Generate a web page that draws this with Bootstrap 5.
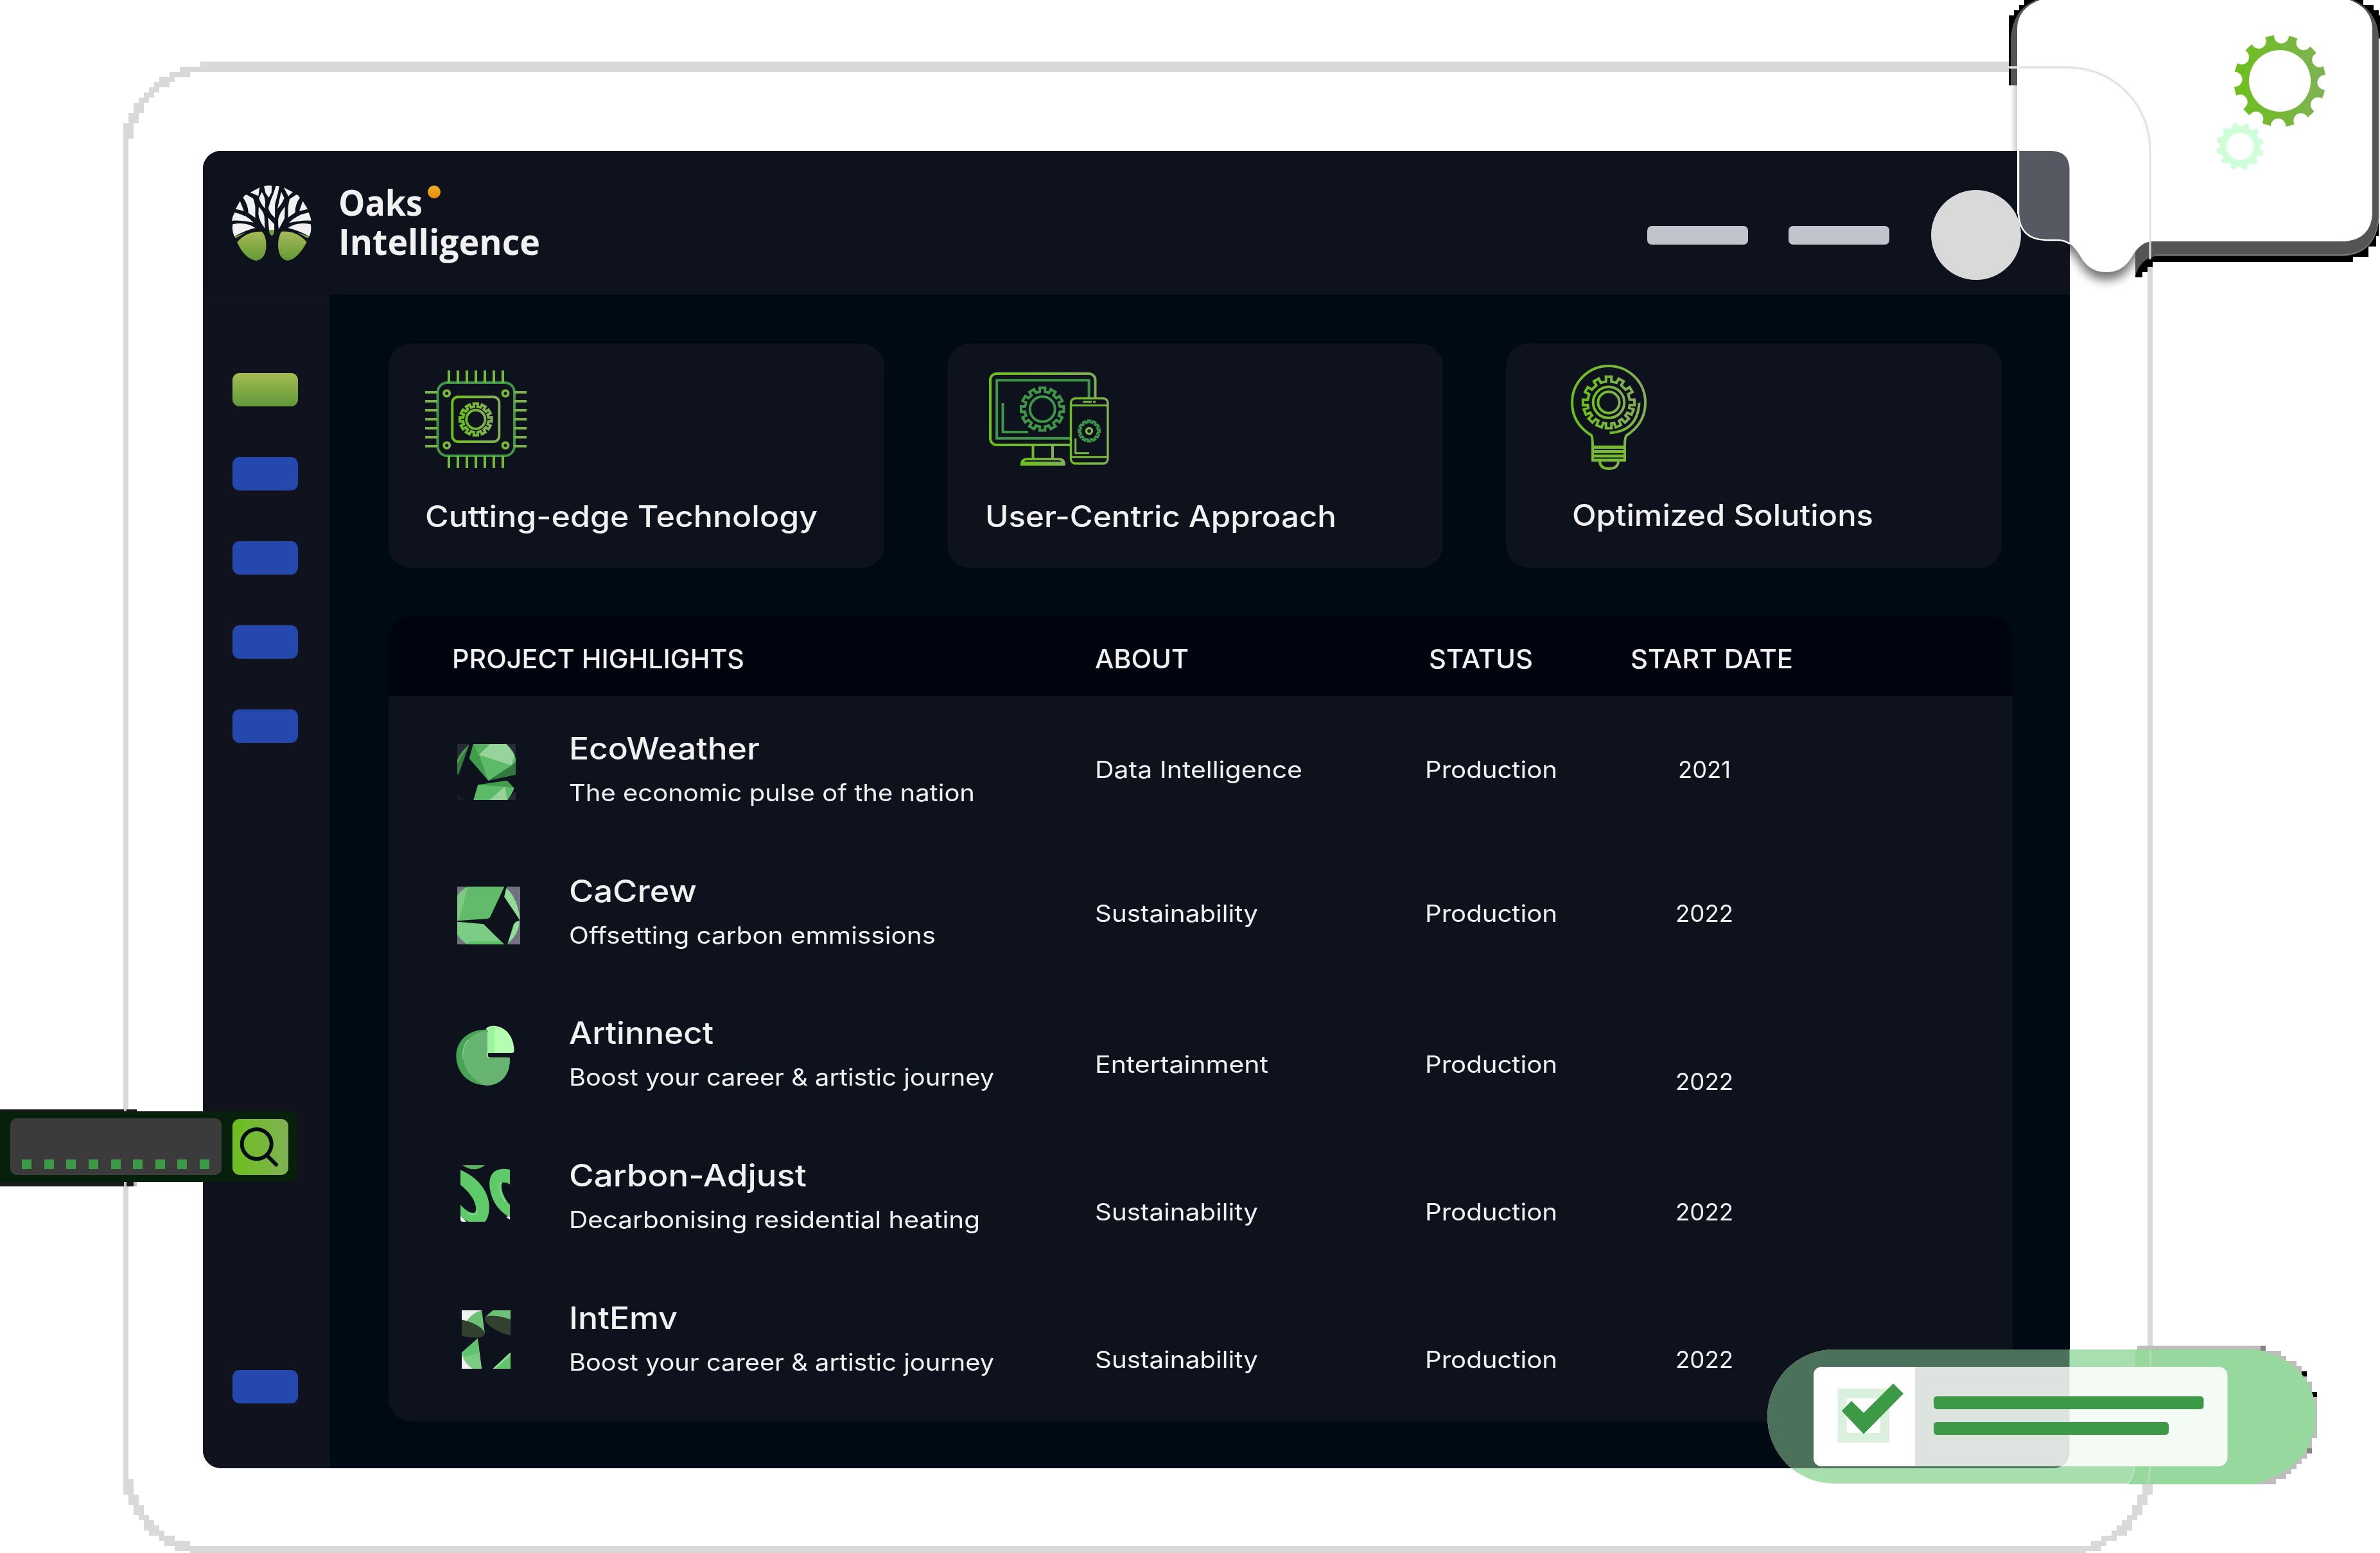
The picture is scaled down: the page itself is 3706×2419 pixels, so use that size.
<!DOCTYPE html>
<html lang="en">
<head>
<meta charset="utf-8">
<title>Oaks Intelligence</title>
<link href="https://cdn.jsdelivr.net/npm/bootstrap@5.3.0/dist/css/bootstrap.min.css" rel="stylesheet">
<style>
body{margin:0;background:#fff;font-family:Inter,"Noto Sans",sans-serif;color:#f1f1f2}
svg{display:block}
.stage{width:3706px;height:2419px;padding:235px 0 0 316px}
.overlay{position:absolute;left:0;top:0}
.panel{width:2907px;height:2052px;border-radius:28px;background:#000a15}
.topbar{height:224px;background:#0d121d;padding:54px 78px 0 45px}
.brand{font:700 55px/61px "Open Sans","Noto Sans",sans-serif;margin-left:42px;margin-top:-5px}
.brand .fit{height:61px}
.orange-dot{left:139px;top:5px;width:20px;height:20px;background:linear-gradient(#ecae2b,#ea8d03)}
.nav-pill{width:157px;height:29px;border-radius:7px;background:#c1c4cb}
.avatar{width:140px;height:140px;background:#d9d9d9;z-index:3}
.avatar-float{left:3007px;top:296px}
.rail{width:198px;background:#10131e;padding:122px 0 101px 46px}
.tile{width:102px;height:52px;border-radius:11px;background:#2548ae}
.tile-on{background:linear-gradient(#a5bb51,#60993a)}
.main-area{padding:76px 0 0 91px}
.feature{width:772px;height:350px;border-radius:36px;background:#0d121d}
.feature .fit{font-size:46px;line-height:60px;font-weight:500}
.board{width:2529px;height:1255px;border-radius:36px;background:#0d121d;margin-top:74px}
.board-head{height:125px;background:#00040f;font-size:41px;font-weight:500;line-height:50px;padding-top:42px}
.c-name{width:1100px}.c-about{width:514px}.c-status{width:392px}.c-date{width:300px}
.item{height:221.7px}
.pic{width:281px;padding-left:107px}
.label{width:819px}
.item h2{font-size:47.5px;line-height:60px;font-weight:500;margin:0;padding-top:52px;height:126px}
.item .sub,.item .cell{font-size:37px;line-height:50px;font-weight:400}
.item .cell{padding-top:90px}
.r2 .cell{padding-top:92px}.r3 .cell{padding-top:106px}.r3 .c-date{padding-top:133px}.r4 .cell{padding-top:114px}.r5 .cell{padding-top:122px}
.fit{display:inline-block;white-space:nowrap;transform-origin:0 50%}
.search{left:0;top:1731px;width:463px;height:110px;background:#06200b;border-radius:0 12px 12px 0;padding:11px 14px 11px 16px;z-index:4}
.field{width:329px;height:88px;border-radius:10px;background:#3c3b3b;padding:0 19px 9px 18px}
.dash{width:15px;height:15px;background:#3c9a47}
.search-btn{width:87px;height:87px;border-radius:11px;background:linear-gradient(90deg,#6dbe1e,#80b254)}
</style>
<script src="https://cdn.jsdelivr.net/npm/bootstrap@5.3.0/dist/js/bootstrap.bundle.min.js"></script>
</head>
<body>
<div class="stage position-relative overflow-hidden">

<!-- tablet outline -->
<svg class="overlay" width="3706" height="2419" viewBox="0 0 3706 2419" fill="#d9d9d9" shape-rendering="crispEdges">
<path d="M312 96H3128V112H312zM280 104h32v8h-32zM264 112h32v8h-32zM248 120h24v8h-24zM240 128h24v8h-24zM232 136h16v8h-16zM224 144h16v8h-16zM216 152h16v8h-16zM208 160h16v16h-16zM200 176h16v16h-16zM192 192h16v24h-16zM192 216h8V2304h-8z"/>
<path d="M192 2304h16v24h-16zM200 2328h16v16h-16zM208 2344h16v16h-16zM216 2360h16v8h-16zM224 2368h16v16h-16zM232 2376h16v16h-16zM248 2384h8v16h-8zM256 2392h16v16h-16zM272 2400h16v16h-16zM288 2400h8v16h-8zM296 2408H3248V2419H296z"/>
<path d="M3344 400h8V2312h-8zM3336 2312h16v16h-16zM3328 2328h16v16h-16zM3320 2344h16v16h-16zM3312 2360h16v8h-16zM3304 2368h16v16h-16zM3296 2376h16v16h-16zM3288 2384h16v8h-16zM3272 2392h24v8h-24zM3256 2400h24v8h-24zM3240 2408h32v8h-32z"/>
</svg>

<div class="panel position-relative overflow-hidden">
  <header class="topbar d-flex align-items-start">
    <svg width="124" height="117" viewBox="395 657 255 351" preserveAspectRatio="none" fill="#f1f1f2">
      <defs><linearGradient id="leaf" x1="0" y1="0" x2="0" y2="1"><stop stop-color="#a8b957"/><stop offset="1" stop-color="#5f9a35"/></linearGradient></defs>
      <path d="M454 689L484 666 480 706zM498 661Q510 655 523 658L522 690 513 713 503 692zM536 659L547 661 543 690 533 745 533 808Q515 785 512 762 520 720 527 700zM561 666L590 688 576 707zM431 714Q435 702 441 699L463 717Q468 735 470 755V808L448 785Q447 745 431 714zM421 730L434 776 407 767zM613 714Q609 702 602 699L580 720Q576 745 575 765V806L598 783Q597 745 613 714zM622 730L638 767 611 776zM404 783Q445 795 464 830 430 818 395 821 397 800 404 783zM641 783Q600 795 578 832 615 818 649 821 647 800 641 783zM398 838Q440 825 470 855 440 865 403 895 394 865 398 838zM647 838Q605 825 575 855 610 867 643 895 652 865 647 838zM491 688Q502 715 502 735L501 765Q484 735 482 715zM553 686L563 715Q555 745 541 765zM481 756Q495 775 499 800L501 858Q483 825 480 790zM565 756L564 810 545 862Q542 830 544 810 550 780 565 756zM511 806L531 838V864H514z"/>
      <path fill="url(#leaf)" d="M412 922Q440 870 491 872 505 890 505 935 505 1000 473 1008 435 1000 412 922zM635 922Q605 868 554 872 544 890 543 935 544 1000 573 1008 605 1003 635 922z"/>
      <path fill="#70a541" d="M514 864H531Q530 890 523 891 516 890 514 864zM403 895L440 876 407 904zM643 895L605 876 638 904z"/>
    </svg>
    <div class="brand position-relative d-flex flex-column">
      <span><span class="fit" data-w="131">Oaks</span></span>
      <span><span class="fit" data-w="314">Intelligence</span></span>
      <i class="orange-dot position-absolute rounded-circle"></i>
    </div>
    <div class="ms-auto d-flex align-items-center" style="height:154px;gap:63px">
      <span class="nav-pill"></span><span class="nav-pill"></span><span class="avatar rounded-circle invisible"></span>
    </div>
  </header>

  <div class="d-flex" style="height:1828px">
    <nav class="rail d-flex flex-column flex-shrink-0">
      <div class="d-flex flex-column" style="gap:79px"><span class="tile tile-on"></span><span class="tile"></span><span class="tile"></span><span class="tile"></span><span class="tile"></span></div>
      <span class="tile mt-auto"></span>
    </nav>
    <main class="main-area">
      <div class="d-flex" style="gap:98px">
        <section class="feature" style="padding:42px 0 0 57px">
          <svg width="158" height="153" viewBox="0 0 158 153" fill="none" stroke-width="4">
            <defs><linearGradient id="limeB"><stop stop-color="#6dbf1c"/><stop offset="1" stop-color="#83ae58"/></linearGradient></defs>
            <rect x="19.5" y="19" width="119.500" height="114" rx="15" stroke="#3f9648"/>
            <path stroke="#74bd2b" d="M37 0V19M51 0V19M65 0V19M79 0V19M93 0V19M107 0V19M121 0V19M37 133V152M51 133V152M65 133V152M79 133V152M93 133V152M107 133V152M121 133V152"/>
            <path stroke="#7bb445" d="M0 34H19M0 48H19M0 62H19M0 76H19M0 90H19M0 104H19M0 118H19M139 34H158M139 48H158M139 62H158M139 76H158M139 90H158M139 104H158M139 118H158"/>
            <g stroke="url(#limeB)"><rect x="42.300" y="41.300" width="73" height="69.700" rx="9"/><circle cx="33.700" cy="35.700" r="4.500"/><circle cx="125" cy="35.700" r="4.500"/><circle cx="33.700" cy="116.700" r="4.500"/><circle cx="125" cy="116.700" r="4.500"/><circle cx="78.800" cy="76.300" r="14.600"/><path data-gear="78.8,76.3,25,20,12"/></g>
          </svg>
          <div style="margin-top:44px"><span class="fit" data-w="611">Cutting-edge Technology</span></div>
        </section>
        <section class="feature" style="padding:45px 0 0 59px">
          <svg style="margin-left:6px" width="188" height="146" viewBox="0 0 188 146" fill="none" stroke-width="4">
            <g stroke="url(#limeB)"><rect x="2" y="2" width="163.500" height="111" rx="10"/><path d="M68.500 112V134M99 112V134"/><path d="M51 143.500V142Q52 135 60 135H108Q117 135 117 143.500zM52 141H116"/></g>
            <g stroke="#3f9648"><rect x="12.200" y="12.300" width="143.500" height="90.500"/><path d="M21.500 48V93H61"/><circle cx="83.200" cy="57.300" r="19.500"/><path data-gear="83.2,57.3,33.5,27.5,12"/></g>
            <rect x="127.500" y="40.500" width="57.500" height="101.500" rx="7" fill="#0d121d" stroke="url(#limeB)" stroke-width="3.400"/>
            <path stroke="#79b83a" stroke-width="3" d="M128 51.500H185M128 131.700H185M146 46H160M162 46H166M134.700 103V125.700H156"/>
            <path stroke="#3f9648" stroke-width="3" data-gear="156,91.3,16.5,13.5,12"/><circle cx="156" cy="91.300" r="4.500" stroke="#80b650" stroke-width="3.500"/>
          </svg>
          <div style="margin-top:48px"><span class="fit" data-w="547">User-Centric Approach</span></div>
        </section>
        <section class="feature" style="padding:33px 0 0 101px">
          <svg width="118" height="164" viewBox="0 0 118 164" fill="none" stroke-width="4">
            <g stroke="url(#limeB)">
            <path d="M34 127Q34 113 32 110C14 99 2 82 2 59A57 57 0 0 1 116 59C116 82 104 99 87 110Q84 112 84 127"/>
            <path d="M45 151Q46 162 59 162 73 162 74 151"/><circle cx="59" cy="58.800" r="24.300"/><circle cx="59" cy="58.800" r="16.600"/>
            <path d="M106.500 59.500Q104 104 60.500 106.300"/>
            <path data-gear="59,58.8,40.3,33,14" data-angles="0,29,60,90,112,135,158,180,202,225,248,270,300,331"/></g>
            <rect x="32" y="126" width="54" height="25" fill="#78ba35"/>
            <path d="M36 132H82M36 139H82M36 145.500H82" stroke="#0a1a10" stroke-width="2.200"/>
          </svg>
          <div style="margin-top:40px;padding-left:2px"><span class="fit" data-w="469">Optimized Solutions</span></div>
        </section>
      </div>

      <section class="board overflow-hidden">
        <div class="board-head d-flex">
          <div class="c-name" style="padding-left:99px"><span class="fit" data-w="455">PROJECT HIGHLIGHTS</span></div>
          <div class="c-about"><span class="fit" data-w="146">ABOUT</span></div>
          <div class="c-status" style="padding-left:6px"><span class="fit" data-w="162">STATUS</span></div>
          <div class="c-date" style="margin-left:-72px"><span class="fit" data-w="253">START DATE</span></div>
        </div>

        <div class="item r1 d-flex">
          <div class="pic" style="padding-top:75px"><svg width="91" height="87" viewBox="95 82 274 244" preserveAspectRatio="none">
            <path fill="#262b36" d="M95 82H150V90L95 150zM320 82H369V155zM369 290V326H325z"/><path fill="#171c27" d="M95 300L142 326H95z"/>
            <path fill="#33783e" d="M95 150Q115 110 151 86L101 215H95z"/><path fill="#499c52" d="M95 150Q115 110 151 86L95 170z"/>
            <path fill="#5cbb68" d="M170 82H325Q360 110 369 145V215L241 241 152 145z"/><path fill="#3f9d4b" d="M170 82L152 145 241 241 197 129z"/><path fill="#55b060" d="M170 82H248L197 129z"/>
            <path fill="#96d49c" d="M248 82H325Q345 100 362 130L350 175 197 129z"/><path fill="#33793f" d="M369 160V215L241 241 350 175z"/>
            <path fill="#5cbb68" d="M192 260L328 242 362 275Q350 305 330 326H171z"/><path fill="#3f9d4b" d="M192 260L328 242 362 275 318 268z"/><path fill="#96d49c" d="M318 268L330 326H247z"/>
          </svg></div>
          <div class="label"><h2><span class="fit" data-w="297">EcoWeather</span></h2><div class="sub"><span class="fit" data-w="632">The economic pulse of the nation</span></div></div>
          <div class="cell c-about"><span class="fit" data-w="323">Data Intelligence</span></div><div class="cell c-status"><span class="fit" data-w="206">Production</span></div><div class="cell c-date"><span class="fit" data-w="82" style="margin-left:2px">2021</span></div>
        </div>
        <div class="item r2 d-flex">
          <div class="pic" style="padding-top:75px"><svg width="98" height="90" viewBox="95 703 295 252" preserveAspectRatio="none">
            <path fill="#70737d" d="M95 703H145L95 745zM325 703H390V955H330L386 850zM95 905L145 955H95z"/>
            <path fill="#0d121d" d="M315 745L388 850 362 862 330 952H313L218 866 245 842z"/>
            <path fill="#62bb6a" d="M95 743Q115 715 145 703H316L248 838 238 843 95 852z"/><path fill="#7fc986" d="M95 743Q115 715 145 703L102 852H95z"/>
            <path fill="#7bcd83" d="M95 856L218 866 315 955H142Q110 935 95 910z"/><path fill="#5dc269" d="M142 955L150 942H300L315 955z"/>
            <path fill="#90dd97" d="M325 709Q380 755 389 850L315 747zM386 853Q385 910 331 952L360 867Q370 853 386 853z"/>
          </svg></div>
          <div class="label"><h2><span class="fit" data-w="199">CaCrew</span></h2><div class="sub"><span class="fit" data-w="571">Offsetting carbon emmissions</span></div></div>
          <div class="cell c-about"><span class="fit" data-w="254">Sustainability</span></div><div class="cell c-status"><span class="fit" data-w="206">Production</span></div><div class="cell c-date"><span class="fit" data-w="90" style="margin-left:-2px">2022</span></div>
        </div>
        <div class="item r3 d-flex">
          <div class="pic" style="padding-top:70px;padding-left:105px"><svg width="91" height="94" viewBox="90 1308 272 262" preserveAspectRatio="none">
            <path fill="#48a455" d="M237 1327V1448H338Q343 1450 341 1460C338 1535 290 1569 232 1569 145 1568 91 1510 91 1440 92 1375 150 1327 225 1327z"/>
            <path fill="#66b470" d="M237 1330V1448H338Q343 1450 341 1460C338 1535 290 1569 232 1569 165 1550 125 1500 125 1440 125 1380 160 1340 237 1330z"/>
            <path fill="none" stroke="#8fd198" stroke-width="4" d="M148 1370Q118 1400 123 1455"/><path stroke="#b8e8bc" stroke-width="4" fill="none" d="M237 1335V1440Q237 1449 245 1449"/>
            <path fill="#b5fdb1" d="M229 1322Q245 1310 267 1310C330 1315 360 1365 361 1418Q361 1428 350 1428H240V1335z"/><path fill="#9bf59a" d="M240 1335L245 1313 270 1310V1428H240z"/>
          </svg></div>
          <div class="label"><h2><span class="fit" data-w="225">Artinnect</span></h2><div class="sub"><span class="fit" data-w="662">Boost your career &amp; artistic journey</span></div></div>
          <div class="cell c-about"><span class="fit" data-w="270">Entertainment</span></div><div class="cell c-status"><span class="fit" data-w="206">Production</span></div><div class="cell c-date"><span class="fit" data-w="90" style="margin-left:-2px">2022</span></div>
        </div>
        <div class="item r4 d-flex">
          <div class="pic" style="padding-top:66px;padding-left:112px"><svg width="77" height="88" viewBox="112 105 230 264" preserveAspectRatio="none">
            <path fill="#57b561" d="M122 105H226Q175 143 122 105z"/><path fill="#f0f0f0" d="M112 340L140 369H122Q112 369 112 358zM342 338V359L325 348z"/>
            <path fill="#5fca6a" d="M112 127C200 165 246 235 246 300Q245 350 226 369H148Q128 360 112 343V290C145 325 165 330 180 326 192 305 180 250 112 197zM342 126C280 112 246 140 247 195 250 265 290 322 342 348V290C310 255 295 205 307 186Q325 182 342 195z"/>
            <path fill="none" stroke="#8adb91" stroke-width="5" d="M148 330Q180 345 190 320M300 185Q285 220 320 275"/>
          </svg></div>
          <div class="label"><h2><span class="fit" data-w="370">Carbon-Adjust</span></h2><div class="sub"><span class="fit" data-w="640">Decarbonising residential heating</span></div></div>
          <div class="cell c-about"><span class="fit" data-w="254">Sustainability</span></div><div class="cell c-status"><span class="fit" data-w="206">Production</span></div><div class="cell c-date"><span class="fit" data-w="90" style="margin-left:-2px">2022</span></div>
        </div>
        <div class="item r5 d-flex">
          <div class="pic" style="padding-top:70px;padding-left:114px"><svg width="76" height="91" viewBox="118 782 229 274" preserveAspectRatio="none">
            <path fill="#f1f1f2" d="M118 782H212L142 835 118 826z"/><path fill="#6cc175" d="M212 782L226 890Q190 850 142 832 165 795 212 782zM265 782H347V826L229 812z"/>
            <path fill="#32412f" d="M118 826C180 840 226 870 226 893 222 912 185 916 118 902zM229 811Q285 800 347 826V900C285 885 228 850 227 823z"/>
            <path fill="#7ccb83" d="M193 914L212 1056H118V980z"/><path fill="#60c46c" d="M193 914V985L130 1000 118 980zM347 980V1056H264z"/><path fill="#8eda96" d="M345 980L264 1056H276L347 992z"/><path fill="#f1f1f2" d="M118 988Q130 1030 168 1056H118z"/>
          </svg></div>
          <div class="label"><h2><span class="fit" data-w="169">IntEmv</span></h2><div class="sub"><span class="fit" data-w="662">Boost your career &amp; artistic journey</span></div></div>
          <div class="cell c-about"><span class="fit" data-w="254">Sustainability</span></div><div class="cell c-status"><span class="fit" data-w="206">Production</span></div><div class="cell c-date"><span class="fit" data-w="90" style="margin-left:-2px">2022</span></div>
        </div>
      </section>
    </main>
  </div>
</div>

<!-- speech bubble with gears -->
<svg class="overlay" width="3706" height="470" viewBox="0 0 3706 470">
  <defs>
    <path id="bub" d="M3141 43Q3143 10 3182 -2H3653Q3692 10 3694 43V333Q3692 372 3652 376H3351C3338 377 3330 384 3322 396 3312 414 3300 424 3280 424 3258 424 3247 412 3240 400 3230 384 3222 374 3204 374H3186Q3145 372 3143 333L3141 333z"/>
    <clipPath id="tailclip"><path d="M3223 374H3325V462H3223z"/></clipPath>
    <filter id="soft" x="-20%" y="-20%" width="140%" height="150%"><feGaussianBlur stdDeviation="8"/></filter>
    <linearGradient id="side"><stop stop-color="#fff"/><stop offset="1" stop-color="#c9c9c9"/></linearGradient>
    <mask id="m1"><circle cx="3550" cy="126" r="71.500" fill="#fff"/><circle cx="3550" cy="126" r="48"/><g id="n1"></g></mask>
    <mask id="m2"><circle cx="3488" cy="228" r="37" fill="#fff"/><circle cx="3488" cy="228" r="21"/><g id="n2"></g></mask>
  </defs>
  <rect x="3130" y="133" width="12" height="102" fill="url(#side)"/>
  <g clip-path="url(#tailclip)"><use href="#bub" y="12" fill="#000" opacity=".55" filter="url(#soft)"/></g>
  <path fill="#000" shape-rendering="crispEdges" d="M3152 0H3200V133H3128V24H3136V16H3144V8H3152zM3640 0H3680V8H3696V16H3704V24H3706V60H3660zM3660 330H3704V368H3700V384H3688V400H3664V408H3352V416H3344V424H3336V432H3325V385H3400z"/>
  <path fill="#555" d="M3131 133V60Q3134 8 3182 -4H3653Q3702 10 3704.500 60V340Q3700 395 3650 399H3356Q3332 404 3325 430V376H3400L3240 133z"/>
  <path fill="none" stroke="#8d8d8d" stroke-width="1" d="M3704 60V340Q3699 394 3650 397H3356"/>
  <use href="#bub" fill="#fff"/>
  <path fill="#565962" d="M3144 235H3194Q3222.500 236 3222.500 264V380Q3216 375 3204 374H3186Q3144 372 3144 333z"/>
  <path fill="none" stroke="#fff" stroke-width="2.500" d="M3143 235V333Q3145 373 3186 374H3204Q3215 374 3223 380"/>
  <path fill="none" stroke="#e4e4e4" stroke-width="3.500" d="M3128 105H3142M3144 105H3220A128 128 0 0 1 3348 233V376"/><path d="M3348 376V404" stroke="#d5d5d5" stroke-width="3.500"/>
  <linearGradient id="gg" gradientUnits="userSpaceOnUse" x1="3479" y1="0" x2="3621" y2="0"><stop stop-color="#6dbf1c"/><stop offset="1" stop-color="#80b254"/></linearGradient>
  <rect x="3470" y="50" width="160" height="155" fill="url(#gg)" mask="url(#m1)"/>
  <rect x="3440" y="185" width="100" height="90" fill="#cfffd8" mask="url(#m2)"/>
</svg>
<span class="avatar avatar-float rounded-circle position-absolute"></span>

<!-- search box -->
<svg class="overlay" width="700" height="1860" viewBox="0 0 700 1860"><path fill="#1a1a1a" d="M0 1728H213V1732H0zM0 1840H208V1848H0z"/><path fill="#bdbdbd" d="M193 1728h4v4h-4zM193 1840h4v8h-4zM208 1840h5v8h-5z"/></svg>
<div class="search position-absolute d-flex align-items-center justify-content-between">
  <div class="field d-flex align-items-end justify-content-between"><i class="dash"></i><i class="dash"></i><i class="dash"></i><i class="dash"></i><i class="dash"></i><i class="dash"></i><i class="dash"></i><i class="dash"></i><i class="dash"></i></div>
  <div class="search-btn"><svg width="87" height="87" viewBox="0 0 87 87" fill="none" stroke="#020b16" stroke-width="6" stroke-linecap="round"><circle cx="37.700" cy="39" r="23"/><path d="M54 57L68 71"/></svg></div>
</div>

<!-- checklist pill -->
<svg class="overlay" width="3706" height="2419" viewBox="0 0 3706 2419">
  <defs>
    <path id="pill" d="M3325 2102H2855A103 104.350 0 0 0 2855 2310.700H3314Q3322 2298 3325 2284z"/>
    <rect id="sheet" x="2824" y="2129" width="644.500" height="155" rx="14"/>
    <clipPath id="onpanel"><path d="M2700 2050H3222.500V2259Q3222.500 2287 3195 2287H2700z"/></clipPath>
  </defs>
  <path fill="#bdbdbd" shape-rendering="crispEdges" d="M3328 2096H3528V2104H3552V2112H3560V2120H3576V2128H3584V2136H3592V2152H3600V2168H3608V2240H3600V2264H3592V2272H3584V2280H3576V2288H3568V2296H3560V2304H3544V2312H3500V2110H3328z"/>
  <path fill="#858585" d="M3520 2096h8v8h-8zM3592 2256h8v8h-8z"/><path d="M3584 2136h8v8h-8zM3600 2168h8v8h-8z"/>
  <use href="#pill" fill="#a7dfae"/>
  <g clip-path="url(#onpanel)"><use href="#pill" fill="#4c715a"/><path fill="#53775f" d="M3134 2102V2214H2753Q2740 2120 2855 2102z" style="clip-path:path('M3134 2102H2855A103 104.350 0 0 0 2753 2214H3134z')"/></g>
  <path fill="#97d89e" d="M3325 2102H3515Q3606 2125 3606 2206 3604 2285 3510 2312H3314Q3323 2298 3325 2284z"/>
  <path d="M3348.500 2102V2284L3345 2311" fill="none" stroke="#b5d9b7" stroke-width="3"/>
  <use href="#sheet" fill="#f4fbf4"/>
  <use href="#sheet" fill="#dde4df" clip-path="url(#onpanel)"/>
  <path fill="#fff" d="M2982 2129H2838Q2824 2129 2824 2143V2270Q2824 2284 2838 2284H2982z"/>
  <path fill="#daf2dd" fill-rule="evenodd" d="M2861.500 2163H2942V2247H2861.500zM2875.700 2178V2232H2928V2178z"/>
  <path fill="#3c9a47" d="M2867.800 2197.700L2883 2182.300 2902 2200.700 2948 2155 2964 2170.700 2902 2233.700z"/>
  <rect x="3011" y="2175" width="420.500" height="20" rx="5" fill="#3c9a47"/><rect x="3011" y="2215" width="366" height="20" rx="5" fill="#3c9a47"/>
</svg>
</div>

<script>
// Gear outlines: centre, outer radius, root radius, tooth count
document.querySelectorAll('[data-gear]').forEach(function(p){
  var v=p.dataset.gear.split(',').map(Number),n=v[4],a=p.dataset.angles?p.dataset.angles.split(',').map(Number):[];
  if(!a.length)for(var i=0;i<n;i++)a.push(i*360/n);
  var pt=function(r,d){d=d*Math.PI/180;return (v[0]+r*Math.sin(d)).toFixed(1)+' '+(v[1]-r*Math.cos(d)).toFixed(1)};
  var h=360/n*.24,s=[];
  a.forEach(function(d){s.push(pt(v[3],d-h*1.15),pt(v[2],d-h),pt(v[2],d+h),pt(v[3],d+h*1.15))});
  p.setAttribute('d','M'+s.join('L')+'z');
});
// Round notches cut out of the solid gears
function notches(id,cx,cy,R,r){var g=document.getElementById(id),o='';for(var i=0;i<12;i++){var t=(2+i*30)*Math.PI/180;o+='<circle cx="'+(cx+R*Math.sin(t))+'" cy="'+(cy-R*Math.cos(t))+'" r="'+r+'"/>'}g.innerHTML=o}
notches('n1',3550,126,70,11.5);notches('n2',3488,228,36.5,5.5);
// Widen the letterforms of each label to its set measure
document.querySelectorAll('.fit').forEach(function(e){
  var w=e.getBoundingClientRect().width;
  e.style.transform='scaleX('+(+e.dataset.w/w).toFixed(4)+')';
});
</script>
</body>
</html>
